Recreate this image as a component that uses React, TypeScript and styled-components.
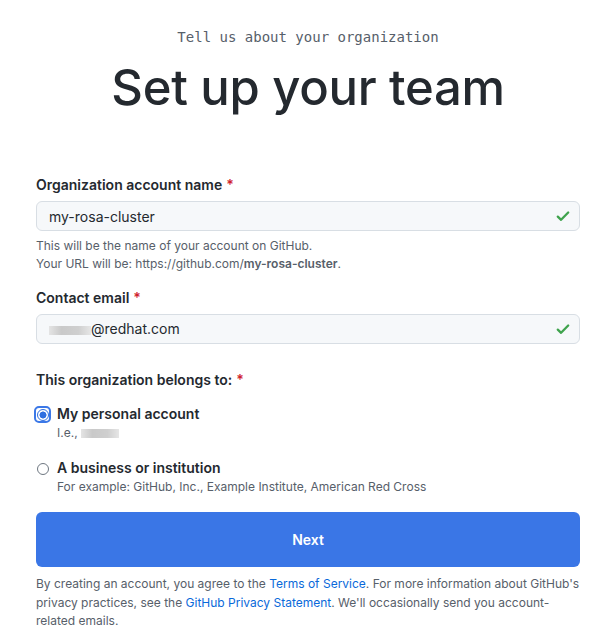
import React, { useState } from 'react';
import styled, { createGlobalStyle } from 'styled-components';

const GlobalStyle = createGlobalStyle`
    body {
        margin: 0;
        background: #ffffff;
        font-family: Inter, "Noto Sans", "Liberation Sans", sans-serif;
        color: #24292f;
    }
`
const Page = styled.div`
    width: 544px;
    padding: 28px 0 0 36px;
`
const Head = styled.div`
    text-align: center;
`
const Kicker = styled.p`
    margin: 0;
    font-family: "DejaVu Sans Mono", "Liberation Mono", monospace;
    font-size: 14px;
    line-height: 18px;
    color: #57606a;
`
const Title = styled.h1`
    margin: 12px 0 0;
    font-size: 49px;
    font-weight: 500;
    line-height: 60px;
    letter-spacing: -0.3px;
    color: #24292f;
`
const Form = styled.form`
    margin-top: 57px;
    display: flex;
    flex-direction: column;
`
const Field = styled.div<{ $gap?: number }>`
    margin-bottom: ${p => p.$gap ?? 0}px;
`
const Label = styled.label`
    display: block;
    font-size: 14px;
    font-weight: 600;
    line-height: 20px;
    margin-bottom: 6px;
    span {
        color: #cf222e;
        margin-left: 4px;
    }
`
const InputWrap = styled.div`
    position: relative;
    svg {
        position: absolute;
        right: 9px;
        top: 7px;
    }
`
const Input = styled.input`
    box-sizing: border-box;
    width: 100%;
    height: 30px;
    padding: 0 36px 0 12px;
    font-family: inherit;
    font-size: 14px;
    color: #24292f;
    background: #f6f8fa;
    border: 1px solid #d8dee4;
    border-radius: 6px;
    :focus { outline: none; }
`
const Blur = styled.i<{ $w: number }>`
    display: inline-block;
    width: ${p => p.$w}px;
    height: 9px;
    vertical-align: -1px;
    background: linear-gradient(90deg, #e4e4e4, #c9c9c9 30%, #cfcfcf 70%, #e6e6e6);
    filter: blur(0.6px);
`
const FakeValue = styled.div`
    position: absolute;
    left: 13px;
    top: 0;
    line-height: 30px;
    font-size: 14px;
    color: #24292f;
    pointer-events: none;
`
const Note = styled.p`
    margin: 6px 0 0;
    font-size: 12px;
    line-height: 18px;
    color: #57606a;
    b {
        font-weight: 600;
        color: #57606a;
    }
`
const Options = styled.div`
    display: flex;
    flex-direction: column;
    gap: 16px;
    margin-top: 14px;
`
const Option = styled.label`
    display: grid;
    grid-template-columns: 21px 1fr;
    cursor: pointer;
`
const Ring = styled.span<{ $on: boolean }>`
    box-sizing: border-box;
    width: 17px;
    height: 17px;
    margin: 2px 0 0 -2px;
    display: flex;
    align-items: center;
    justify-content: center;
    border-radius: 5px;
    border: 2px solid ${p => p.$on ? '#3b78e7' : 'transparent'};
`
const Dot = styled.span<{ $on: boolean }>`
    box-sizing: border-box;
    width: 12px;
    height: 12px;
    border-radius: 50%;
    border: ${p => p.$on ? '1.5px solid #2f6fe0' : '1px solid #6e7781'};
    background: ${p => p.$on ? 'radial-gradient(circle, #2f6fe0 0 3.2px, #fff 3.8px)' : '#fff'};
`
const OptTitle = styled.span`
    font-size: 14px;
    font-weight: 600;
    line-height: 20px;
`
const OptNote = styled.span`
    grid-column: 2;
    font-size: 12px;
    line-height: 18px;
    color: #57606a;
`
const Submit = styled.button`
    margin-top: 16px;
    height: 55px;
    border: none;
    border-radius: 6px;
    background: #3a76e6;
    color: #fff;
    font-family: inherit;
    font-size: 14px;
    font-weight: 600;
    cursor: pointer;
`
const Legal = styled.p`
    margin: 8px 0 0;
    font-size: 12px;
    line-height: 18.5px;
    color: #57606a;
    a {
        color: #0969da;
        text-decoration: none;
    }
`

const Check = () => (
    <svg width="16" height="16" viewBox="0 0 16 16" fill="none">
        <path d="M2.8 8.6l3.3 3.2 7.1-7.3" stroke="#3fa34d" strokeWidth="2.3" strokeLinecap="round" strokeLinejoin="round" />
    </svg>
)

const App = () => {
    const [owner, setOwner] = useState('personal');

    return (
        <>
            <GlobalStyle />
            <Page>
                <Head>
                    <Kicker>Tell us about your organization</Kicker>
                    <Title>Set up your team</Title>
                </Head>
                <Form onSubmit={e => e.preventDefault()}>
                    <Field $gap={15}>
                        <Label>Organization account name<span>*</span></Label>
                        <InputWrap>
                            <Input defaultValue="my-rosa-cluster" />
                            <Check />
                        </InputWrap>
                        <Note>
                            This will be the name of your account on GitHub.<br />
                            Your URL will be: https://github.com/<b>my-rosa-cluster</b>.
                        </Note>
                    </Field>
                    <Field $gap={26}>
                        <Label>Contact email<span>*</span></Label>
                        <InputWrap>
                            <Input aria-label="Contact email" defaultValue="" />
                            <FakeValue><Blur $w={42} />@redhat.com</FakeValue>
                            <Check />
                        </InputWrap>
                    </Field>
                    <Field>
                        <Label>This organization belongs to:<span>*</span></Label>
                        <Options>
                            <Option onClick={() => setOwner('personal')}>
                                <Ring $on={owner === 'personal'}><Dot $on={owner === 'personal'} /></Ring>
                                <OptTitle>My personal account</OptTitle>
                                <OptNote>I.e., <Blur $w={38} /></OptNote>
                            </Option>
                            <Option onClick={() => setOwner('business')}>
                                <Ring $on={owner === 'business'}><Dot $on={owner === 'business'} /></Ring>
                                <OptTitle>A business or institution</OptTitle>
                                <OptNote>For example: GitHub, Inc., Example Institute, American Red Cross</OptNote>
                            </Option>
                        </Options>
                    </Field>
                    <Submit>Next</Submit>
                    <Legal>
                        By creating an account, you agree to the <a href="#">Terms of Service</a>. For more information about GitHub's privacy practices, see the <a href="#">GitHub Privacy Statement</a>. We'll occasionally send you account-related emails.
                    </Legal>
                </Form>
            </Page>
        </>
    )
}

export default App;
